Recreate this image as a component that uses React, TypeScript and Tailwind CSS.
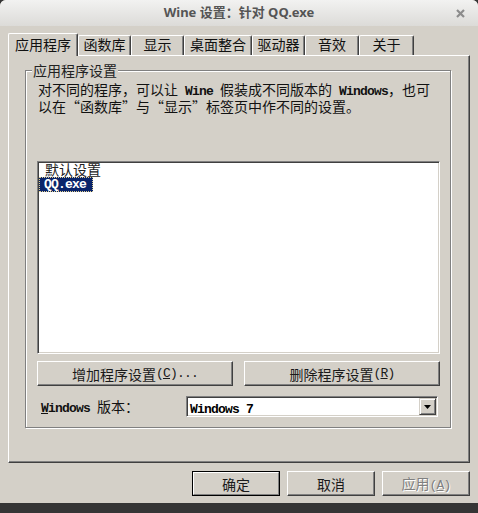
import React from "react";

const M = ({ children, b }: { children: React.ReactNode; b?: boolean }) => (
  <span
    className={
      b
        ? "font-['Liberation_Mono',monospace] text-[13px] leading-none tracking-[-0.8px] font-bold"
        : "font-['Liberation_Mono',monospace] text-[13px] leading-none tracking-[-0.8px]"
    }
  >
    {children}
  </span>
);

const Btn = ({
  children,
  className,
}: {
  children: React.ReactNode;
  className?: string;
}) => (
  <button
    className={
      "h-[25px] bg-[#d4d0c8] border border-t-white border-l-white border-r-[#404040] border-b-[#404040] shadow-[inset_-1px_-1px_0_#808080] flex items-center justify-center text-[14px] leading-[16px] text-[#1a1a1a] " +
      (className || "")
    }
  >
    {children}
  </button>
);

const tabs = [
  { label: "应用程序", cls: "w-[70px]", active: true },
  { label: "函数库", cls: "w-[53px]" },
  { label: "显示", cls: "w-[53px]" },
  { label: "桌面整合", cls: "w-[68px]" },
  { label: "驱动器", cls: "w-[53px]" },
  { label: "音效", cls: "w-[54px]" },
  { label: "关于", cls: "w-[55px]" },
];

export default function App() {
  return (
    <div className="w-[478px] h-[513px] bg-[#353535] font-['Noto_Sans_CJK_SC',sans-serif]">
      <div className="w-[478px] h-[503px] rounded-t-[6px] overflow-hidden bg-[#d4d0c8] flex flex-col">
        {/* title bar */}
        <div className="relative h-[26px] shrink-0 bg-linear-to-b from-[#f2f2f1] to-[#dcdbd8] flex items-center justify-center">
          <span className="font-['Noto_Sans','Noto_Sans_CJK_SC',sans-serif] font-bold text-[13px] text-[#555555]">
            Wine 设置：针对 QQ.exe
          </span>
          <svg
            className="absolute right-[13px] top-[9px]"
            width="9"
            height="9"
            viewBox="0 0 9 9"
          >
            <path d="M1 1L8 8M8 1L1 8" stroke="#8c8c8c" strokeWidth="2.2" />
          </svg>
        </div>

        <div className="px-[8px] pt-[7px]">
          {/* tabs */}
          <div className="flex items-end h-[22px]">
            {tabs.map((t) => (
              <div
                key={t.label}
                className={
                  t.active
                    ? "relative z-10 h-[23px] -mb-[1px] bg-[#d4d0c8] rounded-t-[2px] border-t border-l border-r border-t-white border-l-white border-r-[#404040] shadow-[inset_-1px_0_0_#808080] flex justify-center pt-[2px] text-[14px] leading-[16px] text-[#111] " +
                      t.cls
                    : "h-[20px] rounded-t-[2px] border-t border-l border-r border-t-white border-l-white border-r-[#404040] shadow-[inset_-1px_0_0_#808080] flex justify-center text-[14px] leading-[16px] text-[#111] " +
                      t.cls
                }
              >
                {t.label}
              </div>
            ))}
          </div>

          {/* tab panel */}
          <div className="w-[462px] h-[408px] border border-t-white border-l-white border-r-[#404040] border-b-[#404040] shadow-[inset_-1px_-1px_0_#808080] pl-[16px] pt-[14px]">
            <div className="relative w-[426px] h-[358px] border border-[#808080] shadow-[inset_1px_1px_0_#fff,1px_1px_0_#fff] pl-[11px] pt-[10px]">
              <span className="absolute left-[6px] -top-[9px] bg-[#d4d0c8] px-[1px] text-[14px] leading-[16px] text-[#222]">
                应用程序设置
              </span>

              <p className="h-[32px] whitespace-nowrap text-[14px] leading-[16px] text-[#111] pl-[1px]">
                对不同的程序，可以让<M b> Wine </M>假装成不同版本的
                <M b> Windows</M>，也可
                <br />
                以在“函数库”与“显示”标签页中作不同的设置。
              </p>

              {/* list */}
              <div className="mt-[48px] w-[403px] h-[193px] bg-white border border-t-[#808080] border-l-[#808080] border-r-white border-b-white shadow-[inset_1px_1px_0_#404040,inset_-1px_-1px_0_#d4d0c8] pl-[1px]">
                <div className="h-[15px] pl-[6px] text-[14px] leading-[15px] text-[#222]">
                  默认设置
                </div>
                <div className="flex">
                  <div className="h-[15px] bg-[#0a246a] border border-dotted border-[#e0d090] pl-[4px] pr-[6px] flex items-center text-white">
                    <M b>QQ.exe</M>
                  </div>
                </div>
              </div>

              {/* buttons */}
              <div className="mt-[7px] flex gap-[11px]">
                <Btn className="w-[196px]">
                  增加程序设置
                  <M>
                    (<u>C</u>)...
                  </M>
                </Btn>
                <Btn className="w-[196px]">
                  删除程序设置
                  <M>
                    (<u>R</u>)
                  </M>
                </Btn>
              </div>

              {/* windows version */}
              <div className="mt-[10px] flex items-center">
                <div className="w-[149px] pl-[4px] text-[14px] leading-[16px] text-[#111]">
                  <M b>
                    <u>W</u>indows{" "}
                  </M>
                  版本：
                </div>
                <div className="w-[252px] h-[21px] bg-white border border-t-[#808080] border-l-[#808080] border-r-white border-b-white shadow-[inset_1px_1px_0_#404040,inset_-1px_-1px_0_#d4d0c8] flex items-center pl-[3px] pr-[1px]">
                  <span className="flex-1 text-black leading-none">
                    <M b>Windows 7</M>
                  </span>
                  <div className="w-[17px] h-[17px] bg-[#d4d0c8] border border-t-[#d4d0c8] border-l-[#d4d0c8] border-r-[#404040] border-b-[#404040] shadow-[inset_1px_1px_0_#fff,inset_-1px_-1px_0_#808080] flex items-center justify-center">
                    <svg width="7" height="4" viewBox="0 0 7 4">
                      <path d="M0 0H7L3.5 4Z" fill="#000" />
                    </svg>
                  </div>
                </div>
              </div>
            </div>
          </div>
        </div>

        {/* bottom buttons */}
        <div className="mt-[8px] pr-[8px] flex justify-end gap-[7px]">
          <div className="w-[88px] h-[25px] border border-black">
            <button className="w-full h-full bg-[#d4d0c8] border border-t-white border-l-white border-r-[#808080] border-b-[#808080] flex items-center justify-center text-[14px] leading-[16px] text-[#1a1a1a]">
              确定
            </button>
          </div>
          <Btn className="w-[88px]">取消</Btn>
          <Btn className="w-[88px] [text-shadow:1px_1px_0_#fff]">
            <span className="text-[#808080]">
              应用
              <M>
                (<u>A</u>)
              </M>
            </span>
          </Btn>
        </div>
      </div>
    </div>
  );
}
